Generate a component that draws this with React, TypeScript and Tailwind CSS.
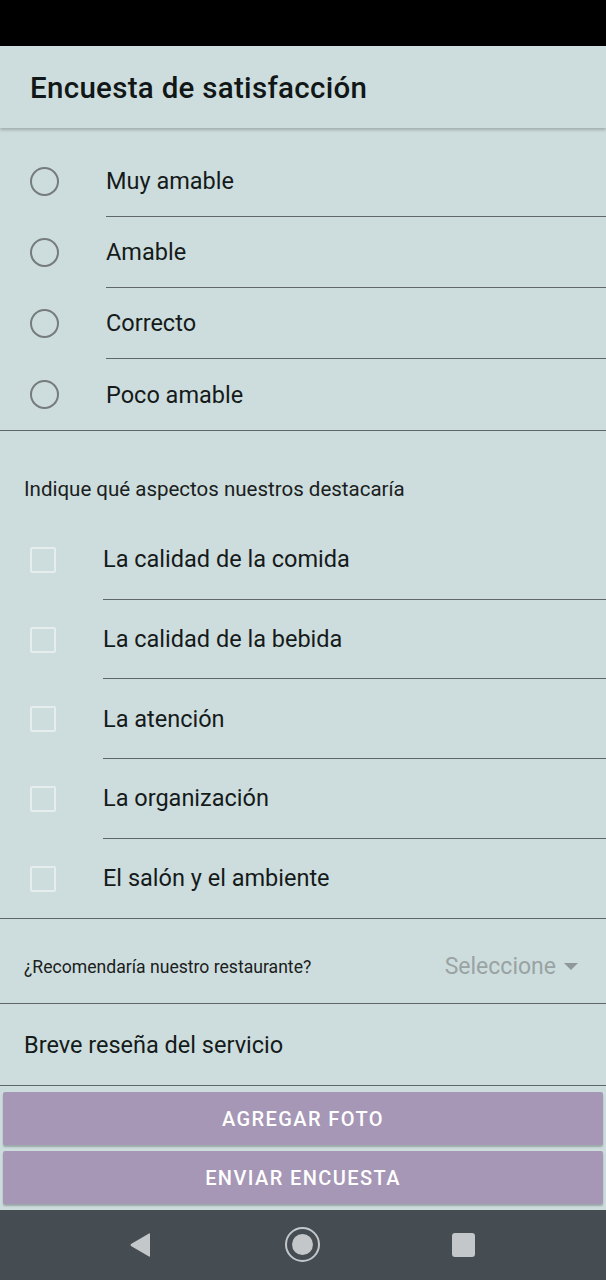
const radios = ["Muy amable", "Amable", "Correcto", "Poco amable"];
const checks = [
  "La calidad de la comida",
  "La calidad de la bebida",
  "La atención",
  "La organización",
  "El salón y el ambiente",
];

export default function App() {
  return (
    <div
      className="w-[606px] h-[1280px] flex flex-col bg-[#cddddd] text-[#151a1a] overflow-hidden"
      style={{ fontFamily: "Roboto, 'Noto Sans', sans-serif" }}
    >
      {/* Status bar */}
      <div className="h-[46px] bg-black shrink-0" />

      {/* App bar */}
      <div className="h-[82px] shrink-0 flex items-center pl-[30px] pt-[3px] bg-[#cddddd] shadow-[0_2px_3px_rgba(0,0,0,0.22)] relative z-10">
        <h1 className="text-[29.5px] font-medium tracking-[0.3px] text-[#111616]">Encuesta de satisfacción</h1>
      </div>

      <div className="flex-1 flex flex-col">
        {/* Radio group */}
        <div className="pt-[18px] border-b border-[#5e6868]">
          {radios.map((r, i) => (
            <div key={r} className="flex items-center h-[71px]">
              <div className="w-[106px] flex justify-center pr-[18px] shrink-0">
                <span className="block w-[29px] h-[29px] rounded-full border-[2.5px] border-[#767c7c]" />
              </div>
              <div
                className={
                  "flex-1 h-full flex items-center pt-[2px] text-[23.5px] " +
                  (i < radios.length - 1 ? "border-b border-[#5e6868]" : "")
                }
              >
                {r}
              </div>
            </div>
          ))}
        </div>

        {/* Checkbox section */}
        <div className="border-b border-[#5e6868]">
          <div className="h-[89px] flex items-center pl-[24px] pt-[27px] text-[20.5px] text-[#1a2020]">
            Indique qué aspectos nuestros destacaría
          </div>
          {checks.map((c, i) => (
            <div key={c} className="flex items-center h-[79.7px]">
              <div className="w-[103px] pl-[30px] shrink-0">
                <span className="block w-[26px] h-[26px] rounded-[2px] border-2 border-[#e6eded]" />
              </div>
              <div
                className={
                  "flex-1 h-full flex items-center pt-[1px] text-[23.5px] " +
                  (i < checks.length - 1 ? "border-b border-[#5e6868]" : "")
                }
              >
                {c}
              </div>
            </div>
          ))}
        </div>

        {/* Recommend */}
        <div className="h-[85px] flex items-center justify-between pl-[24px] pr-[28px] pt-[12px] border-b border-[#5e6868]">
          <span className="text-[17.6px] text-[#1a2020]">¿Recomendaría nuestro restaurante?</span>
          <span className="flex items-center gap-[8px] text-[23px] text-[#9aa3a3]">
            Seleccione
            <svg width="14" height="8" viewBox="0 0 14 8">
              <path d="M0 0 L14 0 L7 7 Z" fill="#8f9898" />
            </svg>
          </span>
        </div>

        {/* Review */}
        <div className="h-[82px] flex items-center pl-[24px] pt-[2px] border-b border-[#5e6868] text-[23.5px]">
          Breve reseña del servicio
        </div>

        {/* Buttons */}
        <div className="flex flex-col gap-[6px] px-[3px] pt-[6px]">
          <button className="h-[53px] rounded-[2px] bg-[#a597b5] text-white text-[20px] font-medium tracking-[1.4px] shadow-[0_2px_2px_rgba(0,0,0,0.25)]">
            AGREGAR FOTO
          </button>
          <button className="h-[53px] rounded-[2px] bg-[#a597b5] text-white text-[20px] font-medium tracking-[1.4px] shadow-[0_2px_2px_rgba(0,0,0,0.25)]">
            ENVIAR ENCUESTA
          </button>
        </div>
      </div>

      {/* Navigation bar */}
      <div className="h-[70px] shrink-0 bg-[#454d53] flex items-center">
        <div className="w-[606px] relative h-full">
          <svg className="absolute left-[129px] top-[22px]" width="23" height="26" viewBox="0 0 23 26">
            <path d="M21 2 L21 24 Q21 25 20 24.5 L2 14 Q1 13 2 12 L20 1.5 Q21 1 21 2 Z" fill="#c3c7c9" />
          </svg>
          <svg className="absolute left-[284px] top-[16px]" width="37" height="37" viewBox="0 0 37 37">
            <circle cx="18.5" cy="18.5" r="16.5" fill="none" stroke="#c3c7c9" strokeWidth="2" />
            <circle cx="18.5" cy="18.5" r="10.5" fill="#c3c7c9" />
          </svg>
          <div className="absolute left-[452px] top-[23px] w-[23px] h-[24px] rounded-[3px] bg-[#c3c7c9]" />
        </div>
      </div>
    </div>
  );
}
